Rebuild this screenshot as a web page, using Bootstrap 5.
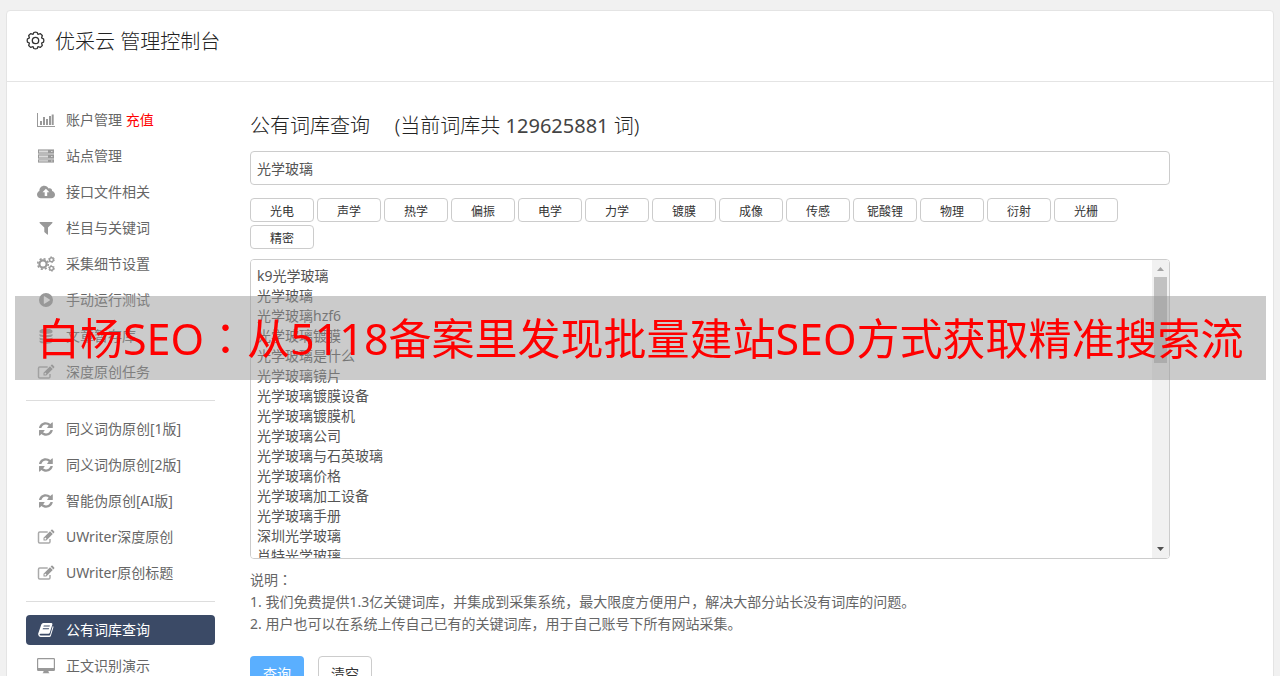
<!DOCTYPE html>
<html lang="zh-CN">
<head>
<meta charset="utf-8">
<meta name="viewport" content="width=device-width, initial-scale=1">
<title>优采云 管理控制台</title>
<link href="https://cdn.jsdelivr.net/npm/bootstrap@5.3.0/dist/css/bootstrap.min.css" rel="stylesheet">
<style>
  html::-webkit-scrollbar { display: none; }
  body { background: #f1f1f1; color: #666; font: 14px/20px "Noto Sans", "Noto Sans CJK SC", sans-serif; }
  .wide-punct { font-family: "Noto Sans CJK TC", sans-serif; line-height: 1; }
  .console { margin: 10px 6px 0; border: 1px solid #e4e4e4; border-radius: 4px; background: #fff; }
  .console-head { height: 71px; padding: 0 19px 10px; border-bottom: 1px solid #e4e4e4; color: #222; gap: 10px; }
  .console-head h1, .main h2 { font-size: 20px; line-height: 28px; font-weight: 300; margin: 0; }
  .console-head h1 { padding-top: 2px; }
  .console-body { padding: 23px 19px; gap: 35px; }
  .side { width: 189px; }
  .side .nav-link { display: flex; align-items: center; gap: 11px; height: 30px; margin-bottom: 6px; padding: 0 11px; color: #666; border-radius: 4px; white-space: nowrap; }
  .side .nav-link svg { width: 18px; height: 16px; fill: #999; flex: none; }
  .side .nav-link.active { background: #3b4a66; color: #fff; }
  .side .nav-link.active svg { fill: #fff; }
  .side hr { margin: 13px 0; border-color: #ddd; opacity: 1; }
  .pay { color: #f00; }
  .main { max-width: 920px; min-width: 0; }
  .main h2 { color: #222; margin: 7px 0 11px; white-space: pre-wrap; }
  .main h2 label { margin-right: 4px; }
  .main h2 span { color: #444; }
  .main .form-control { font-size: 14px; line-height: 20px; color: #555; border-color: #ccc; border-radius: 4px; padding: 6px; }
  .main input.form-control { padding: 7px 6px 5px; }
  .tags { gap: 3px; margin: 13px 0 10px; }
  .tags .btn { width: 64px; height: 24px; padding: 3px 0 0; font-size: 12px; line-height: 20px; border: 1px solid #ccc; border-radius: 4px; background: #fff; color: #333; }
  .words { height: 300px; resize: none; overflow-y: scroll; }
  .words::-webkit-scrollbar { display: none; }
  .scroll-rail { position: absolute; top: 1px; right: 1px; bottom: 1px; width: 17px; background: #f1f1f1; border-radius: 0 3px 3px 0; }
  .scroll-rail svg { width: 17px; height: 17px; flex: none; }
  .scroll-thumb { width: 13px; height: 86px; background: #c1c1c1; }
  .notes { margin: 10px 0 21px; line-height: 22px; }
  .actions { gap: 14px; }
  .actions .btn { width: 54px; height: 34px; padding: 0; font-size: 14px; border-radius: 4px; }
  .actions .btn-go { background: #5aafff; color: #fff; }
  .actions .btn-clear { background: #fff; border-color: #ccc; color: #333; }
  .banner { position: absolute; top: 296px; left: 15px; right: 14px; height: 84px; padding-left: 22px; background: rgba(152,152,152,.5); color: #f00; font-size: 43px; line-height: 86px; white-space: nowrap; overflow: hidden; pointer-events: none; }
</style>
</head>
<body>
<svg class="d-none">
  <symbol id="i-refresh" viewBox="0 0 18 16"><path d="M2 7C2.4 3.700 5.200 1.300 8.700 1.300c1.800 0 3.400.7 4.600 1.800L15 1.500q.7-.4.8.4V6.600q0 .5-.5.5H10.600q-.7-.2-.3-.8L11.700 4.700C10.900 4 9.900 3.500 8.800 3.500 6.900 3.500 5.300 4.700 4.600 6.500Q4.400 7 4 7zM15.800 9C15.400 12.300 12.600 14.700 9.100 14.700c-1.800 0-3.400-.7-4.600-1.800L2.800 14.500q-.7.4-.8-.4V9.400q0-.5.5-.5H7.200q.7.2.3.8L6.100 11.300C6.900 12 7.900 12.500 9 12.500c1.900 0 3.500-1.200 4.200-3Q13.400 9 13.800 9z"/></symbol>
  <symbol id="i-edit" viewBox="0 0 18 16"><path d="M13 10v2.800q0 1.200-1.200 1.200H2.700Q1.500 14 1.500 12.800V4.200q0-1.200 1.200-1.200h8" fill="none" stroke="#aaa" stroke-width="1.500"/><path fill-rule="evenodd" d="M6.500 11.500V8.700L13 2.200 15.800 5 9.300 11.500zM7.500 9.300V10.500h1.300L9.500 9.800 8.200 8.500zM13.600 1.600l.8-.8q.6-.5 1.200 0l1.600 1.600q.5.600 0 1.200l-.8.8z"/></symbol>
</svg>
<div class="console">
  <header class="console-head d-flex align-items-center">
    <svg width="19" height="20" viewBox="0 0 19 20" fill="none" stroke="#333" stroke-width="1.300"><circle cx="9.500" cy="9.500" r="3.200"/><path transform="translate(0 .5)" stroke-linejoin="round" d="M7.800 1Q9.500.3 11.200 1L11.900 2.900 14.400 2.100 16.300 4 15.600 6.500 17.500 7.300Q18.200 9 17.500 10.700L15.600 11.500 16.300 14 14.400 15.900 11.900 15.100 11.200 17Q9.500 17.700 7.800 17L7.100 15.100 4.600 15.900 2.700 14 3.400 11.500 1.500 10.700Q.8 9 1.500 7.300L3.400 6.500 2.700 4 4.600 2.100 7.100 2.900z"/></svg>
    <h1>优采云 管理控制台</h1>
  </header>
  <div class="console-body d-flex align-items-start">
    <nav class="side flex-shrink-0">
      <a class="nav-link" href="#"><svg viewBox="0 0 18 16"><path d="M0 1h1v13h17v1H0zM3 9h2v4H3zM6 5h2v8H6zM9 7h2v6H9zM12 4h2v9h-2zM14.700 2.500h2V13h-2z"/></svg><span>账户管理 <span class="pay">充值</span></span></a>
      <a class="nav-link" href="#"><svg viewBox="0 0 18 16"><path fill-opacity=".35" d="M1 1.500h16v13H1z"/><path fill-rule="evenodd" d="M1 1.500h16v4H1zM2 2.500v2h9v-2zM14 3v1h1.500V3zM1 6.500h16v4H1zM2 7.500v2h9v-2zM14 8v1h1.500V8zM1 11.500h16v3H1zM2 12.300v1.300h9v-1.300zM14 12.500v1h1.500v-1z"/></svg>站点管理</a>
      <a class="nav-link" href="#"><svg viewBox="0 0 18 16"><path fill-rule="evenodd" d="M4 14.300C1.700 14.300 0 12.700 0 10.500 0 8.900 1 7.500 2.400 6.900 2.300 3.800 4.500 1.700 7.200 1.700c2 0 3.700 1.200 4.400 2.900 1.800-.8 3.600.5 3.500 2.400C16.900 7.500 18 9 18 10.700c0 2-1.600 3.600-3.600 3.600zM8.900 4.800 5.500 8.300h2.200V12h2.500V8.300h2.200z"/></svg>接口文件相关</a>
      <a class="nav-link" href="#"><svg viewBox="0 0 18 16"><path d="M3 2h12q.8.200.4.900L11 7.500v6.800q-.2.600-.8.200L7.300 12V7.500L2.600 2.900Q2.300 2.200 3 2z"/></svg>栏目与关键词</a>
      <a class="nav-link" href="#"><svg viewBox="0 0 18 16"><g fill="none" stroke="#999"><circle cx="6" cy="8" r="3.600" stroke-width="2.200"/><circle cx="6" cy="8" r="5.300" stroke-width="1.600" stroke-dasharray="2.080 2.080"/><circle cx="14.500" cy="3.700" r="1.900" stroke-width="1.400"/><circle cx="14.500" cy="3.700" r="2.900" stroke-width="1" stroke-dasharray="1.520 1.520"/><circle cx="14.500" cy="12.300" r="1.900" stroke-width="1.400"/><circle cx="14.500" cy="12.300" r="2.900" stroke-width="1" stroke-dasharray="1.520 1.520"/></g></svg>采集细节设置</a>
      <a class="nav-link" href="#"><svg viewBox="0 0 18 16"><path fill-rule="evenodd" d="M9 1a7 7 0 1 0 0 14A7 7 0 1 0 9 1zM6.800 4.500q.2-.4.700-.2l5.200 3.200q.5.500 0 1L7.500 11.700q-.5.200-.7-.3z"/></svg>手动运行测试</a>
      <a class="nav-link" href="#"><svg viewBox="0 0 18 16"><path d="M2.500 3C2.500 0 15.500 0 15.500 3v1C15.500 6.500 2.500 6.500 2.500 4zM2.500 6C5 7.500 13 7.500 15.500 6v1.500c0 2.500-13 2.500-13 0zM2.500 9.400c2.500 1.500 10.500 1.500 13 0v1.500c0 2.500-13 2.500-13 0zM2.500 12.600c2.500 1.500 10.500 1.500 13 0v1c0 3-13 3-13 0z"/></svg>文章暂存库</a>
      <a class="nav-link" href="#"><svg><use href="#i-edit"/></svg>深度原创任务</a>
      <hr>
      <a class="nav-link" href="#"><svg><use href="#i-refresh"/></svg>同义词伪原创[1版]</a>
      <a class="nav-link" href="#"><svg><use href="#i-refresh"/></svg>同义词伪原创[2版]</a>
      <a class="nav-link" href="#"><svg><use href="#i-refresh"/></svg>智能伪原创[AI版]</a>
      <a class="nav-link" href="#"><svg><use href="#i-edit"/></svg>UWriter深度原创</a>
      <a class="nav-link" href="#"><svg><use href="#i-edit"/></svg>UWriter原创标题</a>
      <hr>
      <a class="nav-link active" aria-current="page" href="#"><svg viewBox="0 0 18 16"><path fill-rule="evenodd" d="M6.300 1H14.500q1.200.2.900 1.400L12.800 10.800q-.4 1-1.500 1H3.600q-1.100.2-1 1 .1.700 1.200.7h8.500q.7 0 .9-.7l2.600-8.700q.9.400.6 1.500l-2.500 8.200q-.4 1.200-1.500 1.200H3.500Q1.500 14.700 1.200 12.600q-.2-.7.200-1.500L4.300 2.500Q4.900 1 6.300 1zM6.800 3.600l-.4 1h6.200l.3-1zM6 6.200l-.4 1h6.200l.3-1z"/></svg>公有词库查询</a>
      <a class="nav-link" href="#"><svg viewBox="0 0 18 16"><path fill-rule="evenodd" d="M1.300 0h15.400q1.300 0 1.300 1.300v10.400q0 1.300-1.300 1.300H11.500v1l1 1.300H5.500l1-1.300V13H1.300Q0 13 0 11.700V1.300Q0 0 1.300 0zM1.200 1.200v8.800h15.600V1.200z"/></svg>正文识别演示</a>
    </nav>
    <main class="main flex-grow-1">
      <h2><label for="word">公有词库查询</label>    (当前词库共 <span class="fw-normal">129625881</span> 词)</h2>
      <input id="word" class="form-control" type="text" value="光学玻璃">
      <div class="tags d-flex flex-wrap">
        <button class="btn" type="button">光电</button>
        <button class="btn" type="button">声学</button>
        <button class="btn" type="button">热学</button>
        <button class="btn" type="button">偏振</button>
        <button class="btn" type="button">电学</button>
        <button class="btn" type="button">力学</button>
        <button class="btn" type="button">镀膜</button>
        <button class="btn" type="button">成像</button>
        <button class="btn" type="button">传感</button>
        <button class="btn" type="button">铌酸锂</button>
        <button class="btn" type="button">物理</button>
        <button class="btn" type="button">衍射</button>
        <button class="btn" type="button">光栅</button>
        <button class="btn" type="button">精密</button>
      </div>
      <div class="position-relative">
        <textarea class="form-control words" aria-label="词库结果">k9光学玻璃
光学玻璃
光学玻璃hzf6
光学玻璃镀膜
光学玻璃是什么
光学玻璃镜片
光学玻璃镀膜设备
光学玻璃镀膜机
光学玻璃公司
光学玻璃与石英玻璃
光学玻璃价格
光学玻璃加工设备
光学玻璃手册
深圳光学玻璃
肖特光学玻璃</textarea>
        <div class="scroll-rail d-flex flex-column align-items-center" aria-hidden="true">
          <svg viewBox="0 0 17 17"><path d="M5 11l3.500-4L12 11z" fill="#a3a3a3"/></svg>
          <div class="scroll-thumb"></div>
          <svg class="mt-auto" viewBox="0 0 17 17"><path d="M5 6l3.500 4L12 6z" fill="#505050"/></svg>
        </div>
      </div>
      <div class="notes">
        <div>说明<span class="wide-punct" lang="zh-TW">：</span></div>
        <div>1. 我们免费提供1.3亿关键词库，并集成到采集系统，最大限度方便用户，解决大部分站长没有词库的问题。</div>
        <div>2. 用户也可以在系统上传自己已有的关键词库，用于自己账号下所有网站采集。</div>
      </div>
      <div class="actions d-flex">
        <button class="btn btn-go" type="button">查询</button>
        <button class="btn btn-clear" type="button">清空</button>
      </div>
    </main>
  </div>
</div>
<div class="banner">白杨SEO<span class="wide-punct" lang="zh-TW">：</span>从5118备案里发现批量建站SEO方式获取精准搜索流</div>
<script src="https://cdn.jsdelivr.net/npm/bootstrap@5.3.0/dist/js/bootstrap.bundle.min.js"></script>
</body>
</html>
